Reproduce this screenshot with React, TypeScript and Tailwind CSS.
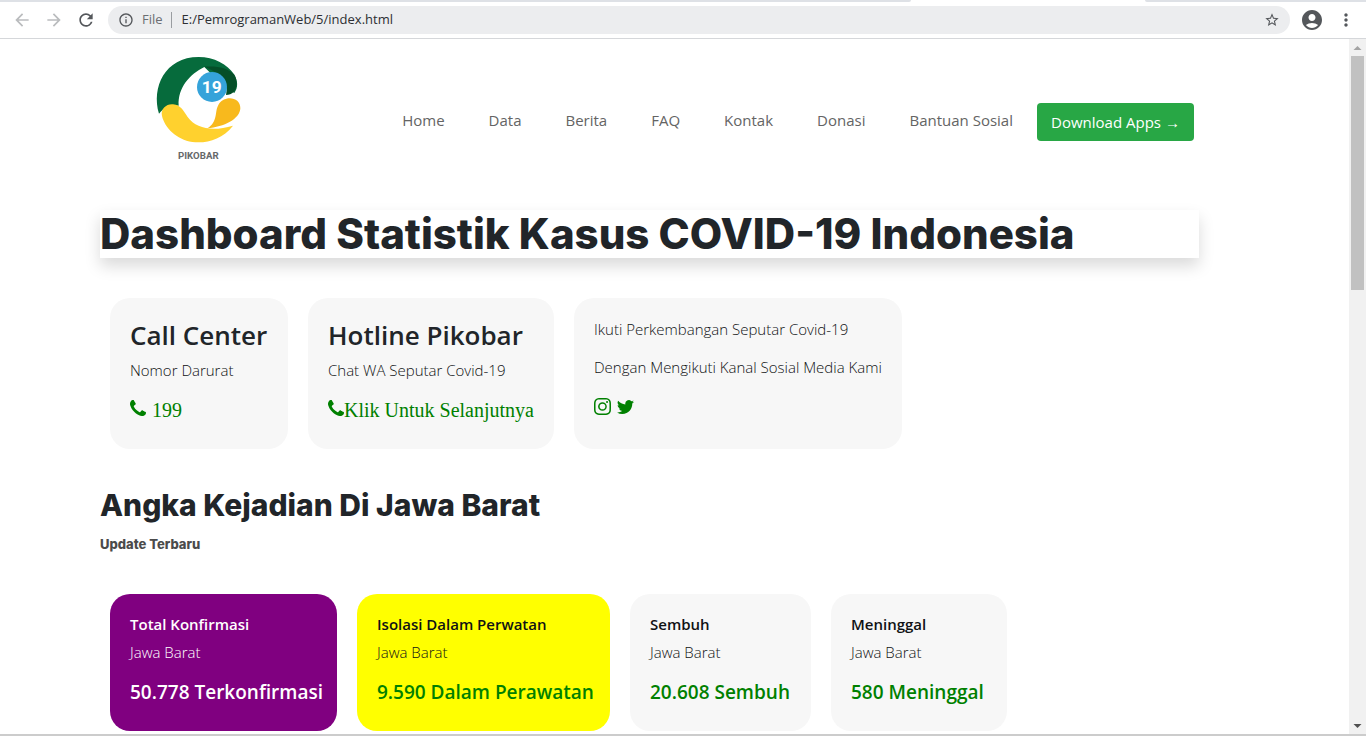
import type { ReactNode } from "react";
import {
  MdAccountCircle,
  MdArrowBack,
  MdArrowForward,
  MdInfoOutline,
  MdMoreVert,
  MdRefresh,
  MdStarBorder,
} from "react-icons/md";
import { BsInstagram, BsTwitter } from "react-icons/bs";

const links = ["Home", "Data", "Berita", "FAQ", "Kontak", "Donasi", "Bantuan Sosial"];

const stats = [
  { title: "Total Konfirmasi", value: "50.778 Terkonfirmasi", box: "w-[227px] bg-[#800080] text-white", number: "text-white" },
  { title: "Isolasi Dalam Perwatan", value: "9.590 Dalam Perawatan", box: "w-[253px] bg-[#ffff00] text-[#101214]", number: "text-[#008000]" },
  { title: "Sembuh", value: "20.608 Sembuh", box: "w-[181px] bg-[#f7f7f7] text-[#101214]", number: "text-[#008000]" },
  { title: "Meninggal", value: "580 Meninggal", box: "w-[176px] bg-[#f7f7f7] text-[#101214]", number: "text-[#008000]" },
];

function BrowserBar() {
  return (
    <div className="shrink-0 border-b border-[#d5d7da] bg-white">
      <div className="flex h-0.5 justify-between">
        <div className="w-2/3 rounded-br bg-[#dee1e6]" />
        <div className="w-[221px] rounded-bl bg-[#dee1e6]" />
      </div>
      <div className="flex h-9 items-center">
        <div className="flex w-[108px] items-center gap-3 pl-3 text-xl">
          <button type="button" aria-label="Back" className="text-[#babcbe]"><MdArrowBack /></button>
          <button type="button" aria-label="Forward" className="text-[#babcbe]"><MdArrowForward /></button>
          <button type="button" aria-label="Reload" className="text-[#54575b]"><MdRefresh /></button>
        </div>
        <div className="flex h-7 grow items-center rounded-full bg-[#ecedef] pr-2.5 pl-2.5 text-[13px] text-[#6b6e72]">
          <MdInfoOutline className="mr-2 size-4 text-[#54575b]" />
          <span>File</span>
          <span className="mx-2 h-4 w-px bg-[#9a9da1]" />
          <input
            aria-label="Address"
            defaultValue="E:/PemrogramanWeb/5/index.html"
            className="grow bg-transparent pl-0.5 text-[#2d2f33] outline-none"
          />
          <button type="button" aria-label="Bookmark" className="text-base text-[#54575b]"><MdStarBorder /></button>
        </div>
        <div className="flex w-[76px] items-center gap-3 pl-2.5 text-[#54575b]">
          <button type="button" aria-label="Profile"><MdAccountCircle className="size-6" /></button>
          <button type="button" aria-label="Menu"><MdMoreVert className="size-5" /></button>
        </div>
      </div>
    </div>
  );
}

function Scrollbar() {
  return (
    <div aria-hidden="true" className="flex w-[17px] shrink-0 flex-col items-center justify-between bg-[#f1f1f1]">
      <div className="flex w-full flex-col items-center">
        <svg viewBox="0 0 17 17" className="size-[17px] fill-[#a3a3a3]"><path d="M8.5 7 12.500 11h-8z" /></svg>
        <div className="h-[234px] w-[13px] bg-[#c1c1c1]" />
      </div>
      <svg viewBox="0 0 17 17" className="size-[17px] fill-[#505050]"><path d="M8.500 11 12.500 7h-8z" /></svg>
    </div>
  );
}

function PhoneIcon() {
  return (
    <svg viewBox="0 0 1408 1408" fill="currentColor" aria-hidden="true" className="mb-1 size-4">
      <path d="M1408 1112q0 27-10 70.500t-21 68.500q-21 50-122 106-94 51-186 51-27 0-53-3.500t-57.500-12.500-47-14.500-55.500-20.500-49-18q-98-35-175-83-127-79-264-216t-216-264q-48-77-83-175-3-9-18-49t-20.500-55.500-14.500-47-12.500-57.500-3.500-53q0-92 51-186 56-101 106-122 25-11 68.500-21t70.500-10q14 0 21 3 18 6 53 76 11 19 30 54t35 63.500 31 53.500q3 4 17.500 25t21.500 35.500 7 28.500q0 20-28.500 50t-62 55-62 53-28.500 46q0 9 5 22.500t8.500 20.500 14 24 11.500 19q76 137 174 235t235 174q2 1 19 11.500t24 14 20.500 8.500 22.500 5q18 0 46-28.500t53-62 55-62 50-28.500q14 0 28.500 7t35.500 21.500 25 17.500q25 15 53.500 31t63.500 35 54 30q70 35 76 53 3 7 3 21z" />
    </svg>
  );
}

function Logo() {
  return (
    <svg viewBox="0 0 360 375" role="img" aria-label="Pikobar" className="h-[125px] w-[120px] shrink-0">
      <path fill="#066b3c" d="M57 206C34 128 74 36 176 36c46 0 87 22 106 52 12 20 13 40 1 56l-32-20-58-58c-44 22-80 62-77 116-26-3-43 4-59 24z" />
      <path fill="#054f28" d="M193 65c35-3 70 2 90 24 10 18 9 38-2 52-6 6-14 9-23 9 8-32-8-62-65-85z" />
      <path fill="#ffd12e" d="M66 213c-5-22 14-37 33-35 25 2 32 22 44 38 26 36 76 44 136 26-33 42-79 54-122 49-47-7-83-43-91-78z" />
      <path fill="#f8b91d" d="M202 250c32-20 22-49 32-68 16-33 68-28 67 8-1 32-49 56-99 60z" />
      <circle cx="216" cy="126" r="45" fill="#35a3da" />
      <text x="215" y="145" textAnchor="middle" fill="#fff" fontFamily="Roboto, sans-serif" fontWeight="700" fontSize="52">19</text>
      <text x="175" y="342" textAnchor="middle" fill="#66686a" fontFamily="Roboto, sans-serif" fontWeight="700" fontSize="29">PIKOBAR</text>
    </svg>
  );
}

function Card({ className, children }: { className: string; children: ReactNode }) {
  return <article className={`rounded-[20px] p-5 whitespace-nowrap ${className}`}>{children}</article>;
}

export default function App() {
  return (
    <div className="flex h-screen flex-col overflow-hidden bg-white font-['Open_Sans','Noto_Sans',sans-serif] text-[#212529]">
      <BrowserBar />
      <div className="flex min-h-0 grow">
        <div className="min-w-0 grow overflow-hidden pr-[150px] pl-[100px]">
          <header className="flex h-[171px] items-start pt-1.5 pr-[5px] pl-10">
            <Logo />
            <nav className="ml-auto flex items-center gap-6 pt-[58px] whitespace-nowrap">
              <ul className="flex gap-11 pb-1 text-[15px] text-[#646464]">
                {links.map((label) => (
                  <li key={label}><a href="#">{label}</a></li>
                ))}
              </ul>
              <button type="button" className="h-[38px] w-[157px] rounded bg-[#28a745] text-[15px] text-white">
                Download Apps →
              </button>
            </nav>
          </header>
          <main>
            <h1 className="font-['Inter',sans-serif] text-[42px] leading-[48px] font-extrabold whitespace-nowrap shadow-[0_8px_16px_rgba(0,0,0,0.15)]">
              Dashboard Statistik Kasus COVID-19 Indonesia
            </h1>
            <section className="mt-10 flex gap-5 pl-2.5">
              <Card className="w-[178px] bg-[#f7f7f7]">
                <h3 className="text-[26px] leading-[34px] font-semibold">Call Center</h3>
                <p className="mt-1.5 text-[15px] leading-6 font-light text-[#101214]">Nomor Darurat</p>
                <a href="#" className="mt-4 flex items-center gap-1.5 font-['Liberation_Serif',serif] text-xl leading-6 text-[#008000]">
                  <PhoneIcon />199
                </a>
              </Card>
              <Card className="w-[246px] bg-[#f7f7f7]">
                <h3 className="text-[26px] leading-[34px] font-semibold">Hotline Pikobar</h3>
                <p className="mt-1.5 text-[15px] leading-6 font-light text-[#101214]">Chat WA Seputar Covid-19</p>
                <a href="#" className="mt-4 flex items-center font-['Liberation_Serif',serif] text-xl leading-6 text-[#008000]">
                  <PhoneIcon />Klik Untuk Selanjutnya
                </a>
              </Card>
              <Card className="h-[151px] w-[328px] bg-[#f7f7f7]">
                <p className="text-[15px] leading-[22px] font-light text-[#101214]">Ikuti Perkembangan Seputar Covid-19</p>
                <p className="mt-4 text-[15px] leading-[22px] font-light text-[#101214]">Dengan Mengikuti Kanal Sosial Media Kami</p>
                <div className="mt-5 flex gap-1.5 text-[#008000]">
                  <a href="#" aria-label="Instagram"><BsInstagram className="size-[17px]" /></a>
                  <a href="#" aria-label="Twitter"><BsTwitter className="size-[17px]" /></a>
                </div>
              </Card>
            </section>
            <h2 className="mt-10 font-['Inter',sans-serif] text-[30px] leading-[33px] font-extrabold">Angka Kejadian Di Jawa Barat</h2>
            <p className="mt-3 font-['Inter',sans-serif] text-[13px] leading-5 font-extrabold text-[#4b4b4b]">Update Terbaru</p>
            <section className="mt-10 flex gap-5 pl-2.5">
              {stats.map((stat) => (
                <Card key={stat.title} className={`h-[137px] ${stat.box}`}>
                  <h5 className="text-[15px] leading-5 font-semibold">{stat.title}</h5>
                  <p className="mt-2 text-[15px] leading-5 font-light">Jawa Barat</p>
                  <p className={`mt-4 text-[19px] leading-7 font-semibold ${stat.number}`}>{stat.value}</p>
                </Card>
              ))}
            </section>
          </main>
        </div>
        <Scrollbar />
      </div>
      <div className="h-0.5 shrink-0 bg-[#cccccc]" />
    </div>
  );
}
